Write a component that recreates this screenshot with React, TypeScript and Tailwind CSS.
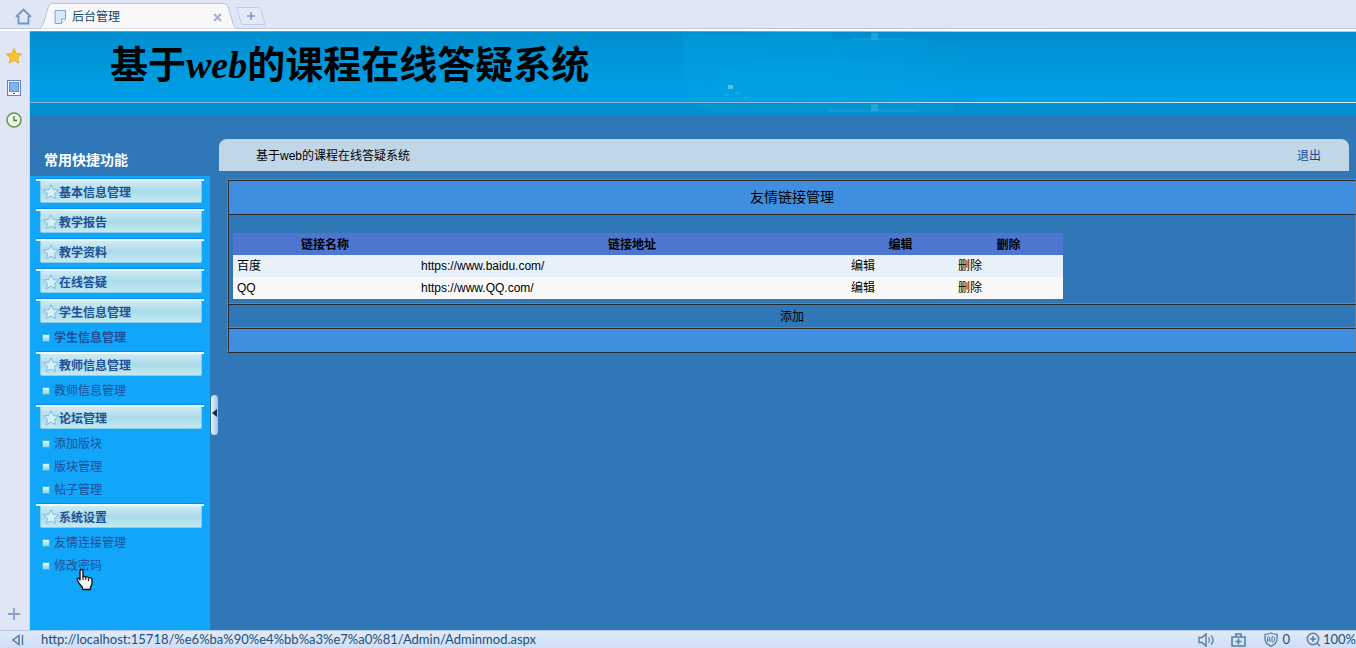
import React, { useState } from 'react';

interface MenuGroup {
  title: string;
  items: { label: string; bold?: boolean; hover?: boolean }[];
}

interface FriendLink {
  name: string;
  url: string;
}

const menu: MenuGroup[] = [
  { title: '基本信息管理', items: [] },
  { title: '教学报告', items: [] },
  { title: '教学资料', items: [] },
  { title: '在线答疑', items: [] },
  { title: '学生信息管理', items: [{ label: '学生信息管理', bold: true }] },
  { title: '教师信息管理', items: [{ label: '教师信息管理' }] },
  { title: '论坛管理', items: [{ label: '添加版块' }, { label: '版块管理' }, { label: '帖子管理' }] },
  { title: '系统设置', items: [{ label: '友情连接管理' }, { label: '修改密码', hover: true }] },
];

const links: FriendLink[] = [
  { name: '百度', url: 'https://www.baidu.com/' },
  { name: 'QQ', url: 'https://www.QQ.com/' },
];

const StarBadge = () => (
  <svg width="16" height="16" viewBox="0 0 16 16" className="shrink-0">
    <path
      d="M8 .8l2.200 4.700 5.200.5-3.900 3.500 1.200 5.200L8 12.100l-4.700 2.600 1.200-5.200L.6 6l5.200-.5z"
      fill="#d3f1fb"
      stroke="#86b9e3"
      strokeLinejoin="round"
    />
  </svg>
);

const HandCursor = () => (
  <svg width="18" height="23" viewBox="0 0 18 23">
    <path
      d="M5.500 1.500c1 0 1.500.7 1.500 1.500v6c.2-1 2.600-1 2.800.4.5-.8 2.600-.6 2.800.7.8-.8 3.400-.3 3.400 1.400V15c0 2-1.500 3-1.500 4.500v2h-8v-2C5.500 18 3.500 16.500 2.700 14.500L1.200 11.800c-.5-1.300 1-2.200 2-1.200L4 12V3c0-.8.5-1.500 1.500-1.500z"
      fill="#f4f4f4"
      stroke="#111"
      strokeWidth="1.300"
      strokeLinejoin="round"
    />
    <path d="M7 9v3M9.800 9.500V12M12.600 10.500V13" stroke="#111" fill="none" />
  </svg>
);

const TabBar = () => (
  <div className="flex h-[31px] shrink-0 border-b-2 border-white bg-[#e0e6f6]">
    <div className="flex flex-1 border-b border-[#b9c6e2]">
      <button aria-label="主页" className="flex h-8 w-8 shrink-0 items-center justify-end">
        <svg width="17" height="17" viewBox="0 0 17 17" fill="none" stroke="#7595c4" strokeWidth="1.800">
          <path d="M1 9L8.500 1.500 16 9" />
          <path d="M3.500 8v7.500h10V8" />
        </svg>
      </button>
      <div className="relative ml-2 mt-[3px] flex h-[26px] w-[196px] shrink-0 items-center px-3.5 pt-0.5">
        <svg width="196" height="26" viewBox="0 0 196 26" className="absolute left-0 top-0">
          <path
            d="M0 25.500C4 24 7 5 9 2.500 10 1 11 .5 13 .5h169c3 0 5 1 6 3 2 5 5 20 8 22z"
            fill="#f8f8f9"
          />
          <path
            d="M0 25.500C4 24 7 5 9 2.500 10 1 11 .5 13 .5h169c3 0 5 1 6 3 2 5 5 20 8 22"
            fill="none"
            stroke="#b3c3e0"
          />
        </svg>
        <svg width="12" height="14" viewBox="0 0 12 14" className="relative">
          <path d="M1 .5h10.500v8.500l-4 4.500H1z" fill="#d9e9fb" stroke="#7ba2dd" />
          <path d="M11.500 9h-4v4.500" fill="#fff" stroke="#7ba2dd" />
        </svg>
        <span className="relative ml-1.5 flex-1 text-xs text-[#12436b]">后台管理</span>
        <button aria-label="关闭标签" className="relative">
          <svg width="9" height="9" viewBox="0 0 9 9" stroke="#9fb2d5" strokeWidth="2">
            <path d="M1 1l7 7M8 1L1 8" />
          </svg>
        </button>
      </div>
      <button aria-label="新建标签" className="mt-[7px] h-[18px]">
        <svg width="30" height="18" viewBox="0 0 30 18" fill="none">
          <path d="M.5.5h21c2 0 3 1 3.500 2.500l4 14.500H8c-2 0-2.500-.5-3-2z" fill="#e3e9f8" stroke="#bfcbe6" />
          <path d="M15 5v8M11 9h8" stroke="#7d97c5" strokeWidth="1.500" />
        </svg>
      </button>
    </div>
  </div>
);

const ToolStrip = () => (
  <div className="flex w-[30px] shrink-0 flex-col items-center gap-4 border-r border-[#cdd4ec] bg-[#e0e6f6] pb-2 pr-px pt-[17px]">
    <button aria-label="收藏">
      <svg width="16" height="16" viewBox="0 0 16 16">
        <path
          d="M8 .5l2.200 5.100 5.500.5-4.200 3.600 1.300 5.500L8 12.300l-4.800 2.900 1.300-5.500L.3 6.100l5.500-.5z"
          fill="#f9c332"
          stroke="#e5a21c"
          strokeWidth=".8"
        />
      </svg>
    </button>
    <button aria-label="手机">
      <svg width="16" height="16" viewBox="0 0 16 16">
        <rect x="1.500" y=".5" width="13" height="15" fill="#f5f8fd" stroke="#5d86bd" />
        <rect x="3.500" y="2.500" width="9" height="9" fill="#82b4f3" stroke="#5d8fd8" />
        <path d="M7 13.500h2" stroke="#3c5f92" />
      </svg>
    </button>
    <button aria-label="历史">
      <svg width="16" height="16" viewBox="0 0 16 16" fill="none">
        <circle cx="8" cy="8" r="7" fill="#eef6e8" stroke="#629a50" strokeWidth="1.600" />
        <path d="M8 4v4.500h3" stroke="#44793a" strokeWidth="1.300" />
      </svg>
    </button>
    <button aria-label="添加" className="mt-auto">
      <svg width="16" height="16" viewBox="0 0 16 16">
        <path d="M8 2v12M2 8h12" stroke="#83a0cd" strokeWidth="1.800" />
      </svg>
    </button>
  </div>
);

const Banner = () => (
  <header className="relative shrink-0 bg-[#008fd0]">
    <div className="h-[72px] border-b border-t border-b-[#84b6cf] border-t-[#5aa5c8] bg-linear-to-b from-[#008ecf] via-[#0098dc] to-[#00a0ea] pl-20">
      <h1 className="relative z-10 whitespace-nowrap text-[38px] font-bold leading-[66px] text-black">
        基于<span className="font-['Liberation_Serif'] italic">web</span>的课程在线答疑系统
      </h1>
    </div>
    <div className="h-3"></div>
    <svg
      className="absolute right-0 top-0"
      width="673"
      height="84"
      viewBox="0 0 673 84"
      fill="none"
    >
      <defs>
        <linearGradient id="rule" x1="0" x2="1">
          <stop offset="0" stopColor="#7fcdf0" stopOpacity="0" />
          <stop offset=".4" stopColor="#b7e6f8" />
          <stop offset="1" stopColor="#d4f1f7" />
        </linearGradient>
        <linearGradient id="glow" x1="0" x2="1">
          <stop offset="0" stopColor="#00a3e2" stopOpacity=".4" />
          <stop offset=".7" stopColor="#00a3e2" stopOpacity=".3" />
          <stop offset="1" stopColor="#00a3e2" stopOpacity="0" />
        </linearGradient>
      </defs>
      <path d="M0 2h150v6h100v8h40v55H4z" fill="url(#glow)" />
      <path d="M35 38l50-8h60l70 2 48 10v26H30z" fill="url(#glow)" />
      <path d="M10 73h260v8H30z" fill="#139cd8" opacity=".4" />
      <path d="M170 8h50M145 80h20M165 80h70" stroke="#2ba7dc" opacity=".7" />
      <rect x="188" y="2" width="7" height="7" fill="#3caede" opacity=".6" />
      <rect x="188" y="73" width="7" height="7" fill="#3caede" opacity=".6" />
      <rect x="45" y="54" width="5" height="4" fill="#4cc0ee" />
      <path d="M42 64h4M52 62h4M60 67h4" stroke="#35b2e6" strokeWidth="2" opacity=".5" />
      <rect y="71" width="673" height="1" fill="url(#rule)" />
      <rect width="673" height="1" fill="url(#rule)" opacity=".6" />
    </svg>
  </header>
);

const Sidebar = () => (
  <aside className="flex w-[180px] shrink-0 flex-col">
    <h2 className="h-[61px] pl-3.5 pt-[34px] text-sm font-bold leading-[22px] text-white">常用快捷功能</h2>
    <nav className="flex-1 bg-[#12a6fb] pt-0.5">
      {menu.map((group) => (
        <section key={group.title} className="pb-0.5">
          <div className="mx-1.5 h-[3px] border-b-2 border-t border-b-[#e8fbff] border-t-[#078cf0]"></div>
          <h3 className="mb-[3px] ml-2.5 mr-2">
            <a
              href="#"
              className="flex h-[22px] items-center rounded-b-xs border border-t-0 border-[#8acde4] bg-linear-to-b from-[#d2ebf3] via-[#a9dbea] via-50% to-[#c4ebf1] pl-0.5 text-xs font-bold text-[#1f4f94]"
            >
              <StarBadge />
              <span className="pt-0.5">{group.title}</span>
            </a>
          </h3>
          {group.items.length > 0 && (
            <ul>
              {group.items.map((item) => (
                <li key={item.label} className="relative flex h-[23px] items-center pl-3">
                  <span className="h-2 w-2 border border-[#35b9dd] bg-linear-to-b from-[#e3f7fb] to-[#86d5ea]"></span>
                  <a
                    href="#"
                    className={item.bold ? 'ml-1 text-xs font-bold text-[#1f4f94]' : 'ml-1 text-xs text-[#1f4f94]'}
                  >
                    {item.label}
                  </a>
                  {item.hover && (
                    <div className="pointer-events-none absolute left-[46px] top-3.5">
                      <HandCursor />
                    </div>
                  )}
                </li>
              ))}
            </ul>
          )}
        </section>
      ))}
    </nav>
  </aside>
);

const LinkTable = () => (
  <table className="w-[830px] table-fixed border-collapse text-left text-xs text-black">
    <thead>
      <tr className="h-[22px] bg-[#4e76d0] text-center">
        <th className="w-[184px] pt-0.5">链接名称</th>
        <th className="w-[430px] pt-0.5">链接地址</th>
        <th className="w-[107px] pt-0.5">编辑</th>
        <th className="w-[109px] pt-0.5">删除</th>
      </tr>
    </thead>
    <tbody>
      {links.map((link) => (
        <tr key={link.name} className="h-[22px] odd:bg-[#e8f0f9] even:bg-[#f8f8f8]">
          <td className="pl-1">{link.name}</td>
          <td className="pl-1">{link.url}</td>
          <td className="pl-1">
            <a href="#">编辑</a>
          </td>
          <td className="pl-1">
            <a href="#">删除</a>
          </td>
        </tr>
      ))}
    </tbody>
  </table>
);

const cell = 'border border-b-[#7f7f7f] border-l-[#2a2a2a] border-r-[#7f7f7f] border-t-[#2a2a2a]';

const Content = () => (
  <main className="min-w-0 flex-1 overflow-hidden pt-6">
    <div className="mr-[7px] flex h-8 items-center justify-between rounded-t-lg bg-[#c1d7e7] pl-[37px] pr-7 pt-0.5 text-xs">
      <span className="text-black">基于web的课程在线答疑系统</span>
      <a href="#" className="text-[#124c8f]">
        退出
      </a>
    </div>
    <div className="-mr-px ml-2 mt-2 border border-b-[#2a2a2a] border-l-[#7f7f7f] border-r-[#2a2a2a] border-t-[#7f7f7f] text-center text-black">
      <h2 className={`${cell} bg-[#408ee0] text-sm leading-8`}>友情链接管理</h2>
      <div className={`${cell} px-1 pb-1 pt-[18px]`}>
        <LinkTable />
      </div>
      <div className={`${cell} pt-0.5 text-xs leading-5`}>
        <a href="#">添加</a>
      </div>
      <div className={`${cell} h-6 bg-[#408ee0]`}></div>
    </div>
  </main>
);

const StatusBar = () => (
  <footer className="flex h-[18px] shrink-0 items-center overflow-hidden border-t border-[#b5c9e8] bg-linear-to-b from-[#dfe9f8] to-[#cfdff5] font-['Lato'] text-[13px] leading-[17px] text-[#1c5078]">
    <button aria-label="收起" className="ml-3 shrink-0">
      <svg width="12" height="12" viewBox="0 0 12 12" fill="none" stroke="#58809f" strokeWidth="1.500">
        <path d="M7 1.500v9L1 6zM10.500 1v10" />
      </svg>
    </button>
    <span className="ml-[17px] flex-1 truncate">
      http://localhost:15718/%e6%ba%90%e4%bb%a3%e7%a0%81/Admin/Adminmod.aspx
    </span>
    <div className="flex shrink-0 items-center">
      <svg width="17" height="14" viewBox="0 0 17 14" fill="none" stroke="#58809f" strokeWidth="1.400">
        <path d="M1 4.500h3l4-3.500v12L4 9.500H1zM10.500 4.500c1.200 1.300 1.200 3.700 0 5M13 2.500c2.800 2.500 2.800 6.500 0 9" />
      </svg>
      <svg width="15" height="14" viewBox="0 0 15 14" fill="none" stroke="#58809f" strokeWidth="1.600" className="ml-4">
        <path d="M1 4h13v9H1zM5 4V1h5v3M7.500 5.500v6M4.500 8.500h6" />
      </svg>
      <svg width="14" height="15" viewBox="0 0 14 15" fill="none" stroke="#58809f" className="ml-[18px]">
        <path d="M7 1c2 1 4 1.300 6 1.300v5c0 3-2 5.200-6 7-4-1.800-6-4-6-7v-5C3 2.300 5 2 7 1z" strokeWidth="1.300" />
        <path d="M3.500 10V6l1-1.500L6 6v4M3.500 8H6M8 4.500v5.500h1l1.500-1.500V6L9 4.500z" />
      </svg>
      <span className="ml-1">0</span>
      <svg width="15" height="15" viewBox="0 0 15 15" fill="none" stroke="#58809f" strokeWidth="1.500" className="ml-4">
        <circle cx="7" cy="7" r="5.700" />
        <path d="M7 4v6M4 7h6M11 11l3 3" />
      </svg>
      <span className="ml-0.5">100%</span>
    </div>
  </footer>
);

const App: React.FC = () => {
  const [collapsed, setCollapsed] = useState(false);

  return (
    <div className="flex h-screen flex-col overflow-hidden font-['Liberation_Sans','Noto_Sans_CJK_SC',sans-serif]">
      <TabBar />
      <div className="flex min-h-0 flex-1">
        <ToolStrip />
        <div className="flex min-w-0 flex-1 flex-col bg-[#3077b7]">
          <Banner />
          <div className="flex min-h-0 flex-1">
            {!collapsed && <Sidebar />}
            <div className="w-[9px] shrink-0 pl-px pt-[280px]">
              <button
                aria-label="切换侧栏"
                onClick={() => setCollapsed(!collapsed)}
                className="flex h-10 w-[7px] items-center justify-center rounded-sm bg-linear-to-r from-[#eaf3fb] to-[#9dc3e6] pb-1"
              >
                <svg width="5" height="8" viewBox="0 0 5 8">
                  <path d="M5 0v8L0 4z" fill="#0c2c50" />
                </svg>
              </button>
            </div>
            <Content />
          </div>
        </div>
      </div>
      <StatusBar />
    </div>
  );
};

export default App;
